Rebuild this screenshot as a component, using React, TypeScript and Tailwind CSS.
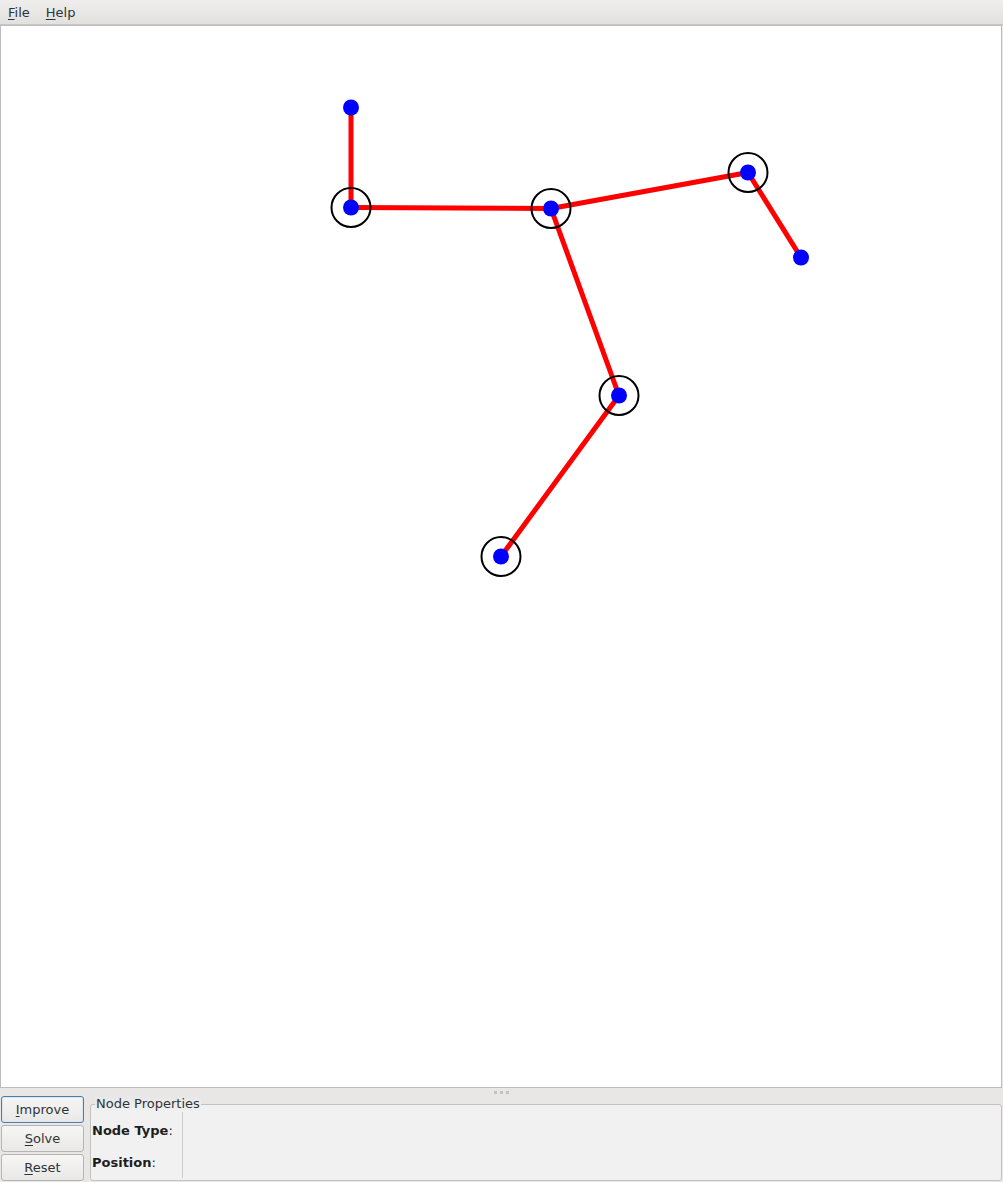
import React from 'react'

type Node = { id: string; x: number; y: number; ring: boolean }

const nodes: Node[] = [
  { id: 'a', x: 351, y: 107, ring: false },
  { id: 'b', x: 351, y: 207, ring: true },
  { id: 'c', x: 551, y: 208, ring: true },
  { id: 'd', x: 748, y: 172, ring: true },
  { id: 'e', x: 801, y: 257, ring: false },
  { id: 'f', x: 619, y: 395, ring: true },
  { id: 'g', x: 501, y: 556, ring: true },
]

const edges: [string, string][] = [
  ['a', 'b'],
  ['b', 'c'],
  ['c', 'd'],
  ['d', 'e'],
  ['c', 'f'],
  ['f', 'g'],
]

const byId = (id: string) => nodes.find((n) => n.id === id)!

function Mnemonic({ first, rest }: { first: string; rest: string }) {
  return (
    <span>
      <span className="underline underline-offset-2">{first}</span>
      {rest}
    </span>
  )
}

function ToolButton({ first, rest, focused }: { first: string; rest: string; focused?: boolean }) {
  return (
    <button
      className={`h-[27px] w-[83px] rounded-[3px] border text-[13px] text-[#2e3436] bg-gradient-to-b from-[#f6f6f5] to-[#e9e8e7] ${
        focused ? 'border-[#4a7ea6] shadow-[inset_0_0_0_1px_#dbe6ef]' : 'border-[#b7b5b3]'
      }`}
    >
      <Mnemonic first={first} rest={rest} />
    </button>
  )
}

export default function App() {
  return (
    <div className="h-[1182px] w-full flex flex-col bg-[#e8e7e6] text-[#2e3436] overflow-hidden font-['DejaVu_Sans',sans-serif]">
      {/* Menu bar */}
      <div className="h-[25px] flex items-center gap-[16px] px-[8px] pt-[1px] text-[13px] bg-gradient-to-b from-[#efeeed] to-[#e2e1e0] border-b border-[#c9c7c5]">
        <Mnemonic first="F" rest="ile" />
        <Mnemonic first="H" rest="elp" />
      </div>

      {/* Canvas */}
      <div className="h-[1063px] bg-white border border-[#bcbcbc] mr-[1px] relative">
        <svg className="absolute inset-0 w-full h-full" viewBox="1 25.5 1000 1061">
          {edges.map(([s, t]) => {
            const a = byId(s)
            const b = byId(t)
            return (
              <line key={s + t} x1={a.x} y1={a.y} x2={b.x} y2={b.y} stroke="#ff0000" strokeWidth={5} />
            )
          })}
          {nodes.map((n) =>
            n.ring ? (
              <circle key={'r' + n.id} cx={n.x} cy={n.y} r={19.5} fill="none" stroke="#000" strokeWidth={2} />
            ) : null
          )}
          {nodes.map((n) => (
            <circle key={n.id} cx={n.x} cy={n.y} r={8} fill="#0000ff" />
          ))}
        </svg>
      </div>

      {/* Splitter */}
      <div className="h-[8px] flex items-center justify-center gap-[3px]">
        <div className="w-[3px] h-[3px] bg-[#c4c2c0]" />
        <div className="w-[3px] h-[3px] bg-[#c4c2c0]" />
        <div className="w-[3px] h-[3px] bg-[#c4c2c0]" />
      </div>

      {/* Bottom panel */}
      <div className="flex-1 flex gap-[6px] pl-[1px] pr-[1px]">
        <div className="flex flex-col gap-[2px]">
          <ToolButton first="I" rest="mprove" focused />
          <ToolButton first="S" rest="olve" />
          <ToolButton first="R" rest="eset" />
        </div>

        <div className="flex-1 relative mt-[8px] mb-[1px] border border-[#c4c2c0] rounded-[3px] bg-[#f2f1f1]">
          <span className="absolute -top-[9px] left-[4px] px-[1px] text-[13px] leading-[16px] bg-gradient-to-b from-[#e8e7e6] to-[#f2f1f1]">
            Node Properties
          </span>
          <div className="flex h-full pt-[7px] pb-[2px]">
            <div className="w-[92px] flex flex-col justify-between pl-[1px] pt-[9px] pb-[6px] text-[13px] text-[#1e1e1e] border-r border-[#cfcdcb]">
              <span>
                <span className="font-bold">Node Type</span>:
              </span>
              <span>
                <span className="font-bold">Position</span>:
              </span>
            </div>
          </div>
        </div>
      </div>
    </div>
  )
}
